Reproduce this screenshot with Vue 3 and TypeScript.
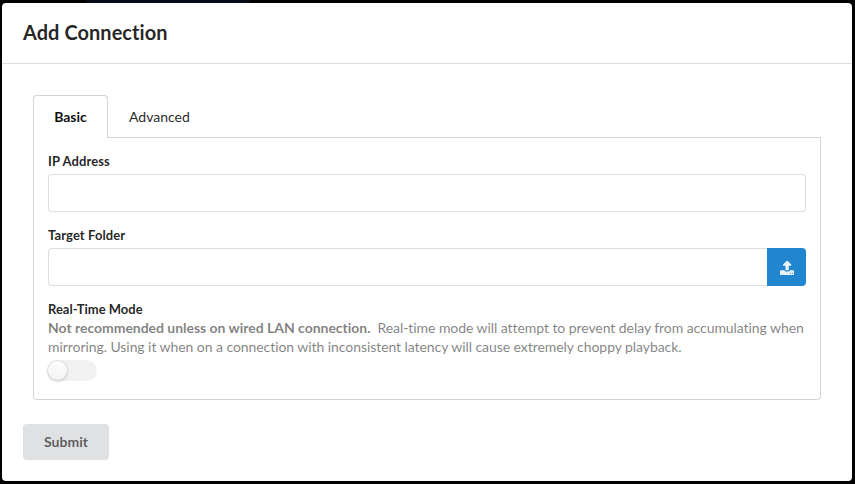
<script setup lang="ts">
import { ref } from 'vue'

type Tab = 'Basic' | 'Advanced'
const tabs: Tab[] = ['Basic', 'Advanced']
const active = ref<Tab>('Basic')
const address = ref('')
const folder = ref('')
const realTime = ref(false)
</script>

<template>
  <div class="page">
    <div class="backdrop-accent"></div>
    <section class="modal" role="dialog" aria-labelledby="title">
      <header id="title" class="header">Add Connection</header>
      <form class="content" @submit.prevent>
        <div class="tabbed">
          <nav class="tabs">
            <button v-for="tab in tabs" :key="tab" type="button" class="tab" :class="{ active: active === tab }" @click="active = tab">{{ tab }}</button>
          </nav>
          <div class="panel">
            <div class="field">
              <label for="address">IP Address</label>
              <input id="address" v-model="address" type="text" />
            </div>
            <div class="field">
              <label for="folder">Target Folder</label>
              <div class="action-input">
                <input id="folder" v-model="folder" type="text" />
                <button type="button" class="upload">
                  <svg viewBox="0 0 1664 1536" preserveAspectRatio="none" aria-hidden="true">
                    <path d="M1280 1344q0-26-19-45t-45-19-45 19-19 45 19 45 45 19 45-19 19-45zM1536 1344q0-26-19-45t-45-19-45 19-19 45 19 45 45 19 45-19 19-45zM1664 1120v320q0 40-28 68t-68 28h-1472q-40 0-68-28t-28-68v-320q0-40 28-68t68-28h427q21 56 70.5 92t110.5 36h256q61 0 110.5-36t70.5-92h427q40 0 68 28t28 68zM1339 472q-17 40-59 40h-256v448q0 26-19 45t-45 19h-256q-26 0-45-19t-19-45v-448h-256q-42 0-59-40-17-39 14-69l448-448q18-19 45-19t45 19l448 448q31 30 14 69z" />
                  </svg>
                </button>
              </div>
            </div>
            <div class="field">
              <label class="mode-label">Real-Time Mode</label>
              <p class="hint"><strong>Not recommended unless on wired LAN connection.</strong><span>&nbsp; Real-time mode will attempt to prevent delay from accumulating when mirroring. Using it when on a connection with inconsistent latency will cause extremely choppy playback.</span></p>
              <button type="button" class="toggle" :class="{ on: realTime }" role="switch" :aria-checked="realTime" @click="realTime = !realTime">
                <span class="knob"></span>
              </button>
            </div>
          </div>
        </div>
        <button type="submit" class="submit">Submit</button>
      </form>
    </section>
  </div>
</template>

<style>
body {
  background: #000;
  overflow: hidden;
}
</style>

<style scoped>
.page,
.page * {
  box-sizing: border-box;
}
.page {
  height: 484px;
  padding: 0 3px 3px 2px;
  background: #000;
  color: rgba(0, 0, 0, 0.87);
  font: 14px/20px Lato, 'Liberation Sans', sans-serif;
  font-variant-ligatures: none;
}
.backdrop-accent {
  width: 163px;
  height: 3px;
  margin-left: 84px;
  background: #020c16;
}
.modal {
  height: 478px;
  border-radius: 4px;
  background: #fff;
}
.header {
  height: 61px;
  padding: 16px 21px;
  border-bottom: 1px solid rgba(34, 36, 38, 0.15);
  font-size: 20px;
  font-weight: 700;
  line-height: 26px;
  letter-spacing: 0.04px;
}
.content {
  padding: 31px 21px 21px;
}
button,
input {
  font: inherit;
  font-variant-ligatures: none;
  margin: 0;
}
.tabbed {
  margin: 0 10px 24px;
}
.tabs {
  display: flex;
  height: 43px;
  border-bottom: 1px solid #d4d4d5;
}
.tab {
  height: 43px;
  padding: 0 20px;
  border: 1px solid transparent;
  border-bottom: 0;
  border-radius: 4px 4px 0 0;
  background: none;
  color: rgba(0, 0, 0, 0.87);
}
.tab.active {
  width: 75px;
  border-color: #d4d4d5;
  background: #fff;
  color: rgba(0, 0, 0, 0.95);
  font-weight: 700;
}
.panel {
  height: 262px;
  padding: 14px;
  border: 1px solid #d4d4d5;
  border-top: 0;
  border-radius: 0 0 4px 4px;
}
.field {
  margin-bottom: 14px;
}
label {
  display: block;
  height: 18px;
  margin-bottom: 4px;
  font-size: 13px;
  font-weight: 700;
  line-height: 18px;
  letter-spacing: 0.1px;
}
.mode-label {
  letter-spacing: 0;
}
input {
  display: block;
  width: 100%;
  height: 38px;
  padding: 9px 14px;
  border: 1px solid rgba(34, 36, 38, 0.15);
  border-radius: 4px;
  background: #fff;
  outline: none;
}
.action-input {
  display: flex;
}
.action-input input {
  flex: 1;
  min-width: 0;
  border-right: 0;
  border-radius: 4px 0 0 4px;
}
.upload {
  display: flex;
  align-items: center;
  justify-content: center;
  width: 39px;
  height: 38px;
  padding: 2px 0 0 1px;
  border: 0;
  border-radius: 0 4px 4px 0;
  background: #2185d0;
}
.upload svg {
  width: 14.3px;
  height: 14px;
  fill: #fff;
  opacity: 0.9;
}
.field:last-child label {
  margin-bottom: 0;
}
.hint {
  margin: 0 -4px 4px 0;
  color: rgba(0, 0, 0, 0.5);
  line-height: 19px;
  letter-spacing: -0.065px;
}
.hint strong {
  letter-spacing: -0.03px;
}
.toggle {
  display: flex;
  width: 49px;
  height: 21px;
  padding: 0;
  border: 0;
  border-radius: 11px;
  background: rgba(0, 0, 0, 0.05);
}
.toggle.on {
  justify-content: flex-end;
  background: #2185d0;
}
.knob {
  width: 21px;
  height: 21px;
  margin-left: -1px;
  border-radius: 50%;
  background: #fff linear-gradient(transparent, rgba(0, 0, 0, 0.05));
  box-shadow: 0 1px 2px rgba(34, 36, 38, 0.15), 0 0 0 1px rgba(34, 36, 38, 0.15) inset;
}
.submit {
  display: block;
  width: 86px;
  height: 36px;
  padding: 0;
  border: 0;
  border-radius: 4px;
  background: #e0e1e2;
  color: rgba(0, 0, 0, 0.6);
  font-weight: 700;
}
</style>
